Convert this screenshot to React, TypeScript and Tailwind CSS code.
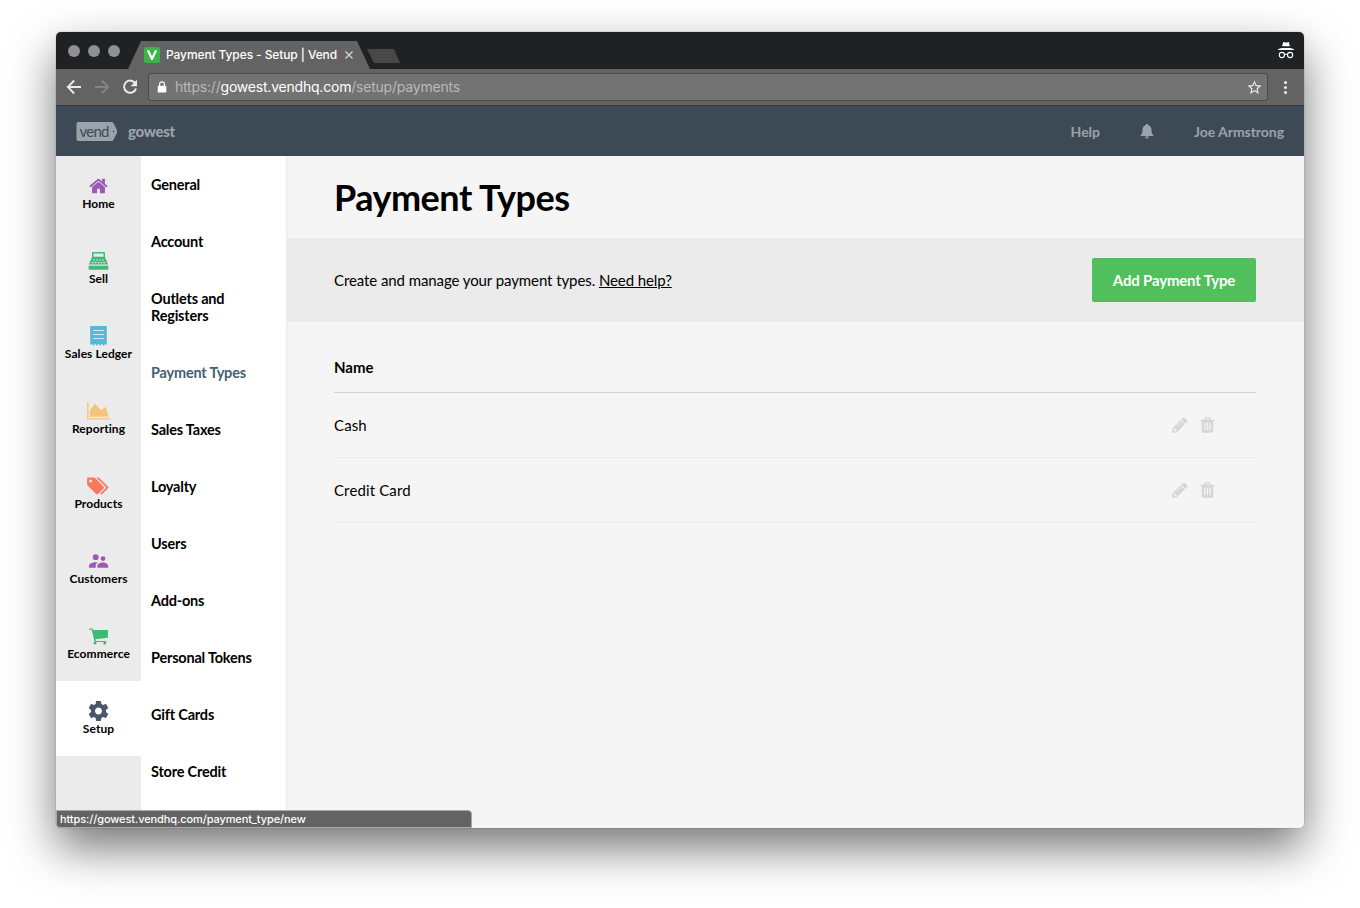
import React from "react";

type IconProps = { className?: string };

const HomeIcon = () => (
  <svg viewBox="0 0 1792 1792" className="h-[20px] w-[21px]" fill="#9b59b6">
    <path d="M1472 992v480q0 26-19 45t-45 19h-384v-384h-256v384h-384q-26 0-45-19t-19-45v-480q0-1 .5-3t.5-3l575-474 575 474q1 2 1 6zm223-69l-62 74q-8 9-21 11h-3q-13 0-21-7l-692-577-692 577q-12 8-24 7-13-2-21-11l-62-74q-8-10-7-23.5t11-21.5l719-599q32-26 76-26t76 26l244 204v-195q0-14 9-23t23-9h192q14 0 23 9t9 23v408l219 182q10 8 11 21.5t-7 23.5z" />
  </svg>
);

const SellIcon = () => (
  <svg viewBox="0 0 20 18" className="h-[18px] w-[21px]" fill="#3fb977">
    <path fillRule="evenodd" d="M4.6 0h10.8q1.1 0 1.1 1.1V6h-13V1.100q0-1.100 1.100-1.100zM5 1.500v3.300h10v-3.300z" />
    <path d="M3.300 5.700h13.400l2.900 6.800H.4z" />
    <path d="M.1 13.700h19.800v2.800q0 1.200-1.200 1.200H1.300Q.1 17.700.1 16.500z" />
    <g fill="#ebebeb">
      <path d="M4.700 7.500h1.600v1.100H4.700zM7.600 7.500h1.600v1.100H7.600zM10.700 7.500h1.600v1.100h-1.600zM13.700 7.500h1.600v1.100h-1.600zM3.300 10h1.700v1.200H3.300zM6.200 10h1.700v1.200H6.200zM9.200 10h1.700v1.200H9.200zM12.100 10h1.700v1.200h-1.700zM15 10h1.700v1.200H15z" />
    </g>
  </svg>
);

const LedgerIcon = () => (
  <svg viewBox="0 0 18 20" className="h-[20px] w-[19px]" fill="#56b8d8">
    <path d="M.7 0h16.600v19.300l-1.400-1.600-1.700 2-1.700-2-1.700 2-1.800-2-1.700 2-1.700-2-1.700 2-1.700-2L.7 19.300z" />
    <path d="M3.500 4.500h11M3.500 8.500h11M3.500 12.500h11" stroke="#d5edf5" strokeWidth="1" />
  </svg>
);

const ReportingIcon = () => (
  <svg viewBox="0 0 2048 1792" className="h-[20px] w-[23px]" fill="#f5c47a">
    <path d="M2048 1536v128h-2048v-1536h128v1408h1920zm-384-1024l256 896h-1664v-576l448-576 576 576z" />
  </svg>
);

const ProductsIcon = () => (
  <svg viewBox="0 0 1920 1792" className="h-[20px] w-[23px]" fill="#f7775f">
    <path d="M384 448q0-53-37.500-90.500t-90.500-37.500-90.500 37.500-37.500 90.500 37.500 90.500 90.500 37.500 90.500-37.500 37.500-90.500zm1067 576q0 53-37 90l-491 492q-39 37-91 37-53 0-90-37l-715-716q-38-37-64.500-101t-26.500-117v-416q0-52 38-90t90-38h416q53 0 117 26.500t102 64.500l715 714q37 39 37 91zm384 0q0 53-37 90l-491 492q-39 37-91 37-36 0-59-14t-53-45l470-470q37-37 37-90 0-52-37-91l-715-714q-38-38-102-64.500t-117-26.500h224q53 0 117 26.500t102 64.500l715 714q37 39 37 91z" />
  </svg>
);

const CustomersIcon = () => (
  <svg viewBox="0 0 20 20" className="h-[20px] w-[21px]" fill="#9b59b6">
    <circle cx="7.200" cy="6.200" r="2.900" />
    <circle cx="14.500" cy="7.600" r="2.400" />
    <path d="M.5 16.800v-1.900c0-2.300 3.900-3.600 6.700-3.600.7 0 1.500.1 2.200.3-1.600.9-2.200 2.200-2.200 3.400v1.800zM8.800 16.800v-1.700c0-2.200 3.100-3.600 5.600-3.600s5.300 1.400 5.300 3.600v1.700z" />
  </svg>
);

const CartIcon = () => (
  <svg viewBox="0 0 20 17" className="h-[17px] w-[21px]" fill="#3fb977">
    <path d="M.6.500h3.500l.6 1.500h14.700v7.700L6.900 11.200l.4 1.700h10.600v1.200H6.100L3.200 1.800H.6z" />
    <circle cx="6.500" cy="15.200" r="1.400" />
    <circle cx="16.300" cy="15.200" r="1.400" />
  </svg>
);

const GearIcon = () => (
  <svg viewBox="2 2 20 20" className="h-[20px] w-[21px]" fill="#48566e">
    <path d="M19.430 12.980c.040-.320.070-.640.070-.980s-.030-.660-.070-.980l2.110-1.650c.190-.150.240-.420.120-.640l-2-3.460c-.120-.220-.390-.300-.610-.220l-2.490 1c-.520-.400-1.080-.730-1.690-.980l-.380-2.650C14.460 2.180 14.250 2 14 2h-4c-.250 0-.460.180-.490.420l-.380 2.650c-.610.250-1.170.590-1.690.980l-2.490-1c-.230-.090-.490 0-.610.220l-2 3.460c-.130.220-.070.490.120.640l2.110 1.650c-.040.320-.070.650-.070.980s.030.660.070.980l-2.110 1.650c-.190.150-.240.420-.120.640l2 3.460c.120.220.390.300.610.220l2.490-1c.520.400 1.080.730 1.690.980l.380 2.650c.030.240.240.420.490.420h4c.250 0 .460-.180.490-.420l.380-2.650c.610-.250 1.170-.590 1.690-.980l2.490 1c.230.090.490 0 .610-.220l2-3.460c.120-.220.070-.490-.120-.640l-2.110-1.650zM12 15.500c-1.930 0-3.500-1.570-3.500-3.500s1.570-3.500 3.500-3.500 3.500 1.570 3.500 3.500-1.570 3.500-3.500 3.500z" />
  </svg>
);

const PencilIcon = () => (
  <svg viewBox="0 0 1792 1792" className="h-[18px] w-[18px]">
    <path d="M491 1536l91-91-235-235-91 91v107h128v128h107zm523-928q0-22-22-22-10 0-17 7l-542 542q-7 7-7 17 0 22 22 22 10 0 17-7l542-542q7-7 7-17zm-54-192l416 416-832 832h-416v-416zm683 96q0 53-37 90l-166 166-416-416 166-165q36-38 90-38 53 0 91 38l235 234q37 39 37 91z" fill="#d6d6d6" />
  </svg>
);

const TrashIcon = () => (
  <svg viewBox="0 0 1792 1792" className="h-[18px] w-[19px]">
    <path d="M704 1376v-704q0-14-9-23t-23-9h-64q-14 0-23 9t-9 23v704q0 14 9 23t23 9h64q14 0 23-9t9-23zm256 0v-704q0-14-9-23t-23-9h-64q-14 0-23 9t-9 23v704q0 14 9 23t23 9h64q14 0 23-9t9-23zm256 0v-704q0-14-9-23t-23-9h-64q-14 0-23 9t-9 23v704q0 14 9 23t23 9h64q14 0 23-9t9-23zm-544-992h448l-48-117q-7-9-17-11h-317q-10 2-17 11zm928 32v64q0 14-9 23t-23 9h-96v948q0 83-47 143.500t-113 60.500h-832q-66 0-113-58.500t-47-141.500v-952h-96q-14 0-23-9t-9-23v-64q0-14 9-23t23-9h309l70-167q15-37 54-63t79-26h320q40 0 79 26t54 63l70 167h309q14 0 23 9t9 23z" fill="#d6d6d6" />
  </svg>
);

const BellIcon = () => (
  <svg viewBox="0 0 14 15" className="h-[15px] w-[14px]" fill="#9aa3a9">
    <path d="M7 0c.7 0 1.200.5 1.200 1.100 2.100.6 3.300 2.500 3.300 4.900 0 3 .7 4.300 1.900 5.300v.7H.6v-.7C1.800 10.300 2.500 9 2.500 6c0-2.400 1.200-4.300 3.300-4.900C5.800.5 6.300 0 7 0zM5 12.600h4c0 1-.9 1.800-2 1.800s-2-.8-2-1.800z" />
  </svg>
);

const IncognitoIcon = () => (
  <svg viewBox="0 0 18 17" className="h-[17px] w-[18px]">
    <path d="M6.200 0l2 .5h1.600l2-.5 1.100 4.300H5.100z M.3 8C1.800 6.700 3.800 6 5 5.900h8c1.200.1 3.200.8 4.700 2.100z" fill="#fff" />
    <g fill="none" stroke="#fff" strokeWidth="1.100">
      <circle cx="4.900" cy="13" r="2.600" />
      <circle cx="13.100" cy="13" r="2.600" />
      <path d="M7.500 12.600q1.500-.8 3 0" />
    </g>
  </svg>
);

const BackIcon = ({ className }: IconProps) => (
  <svg viewBox="0 0 16 16" className={className} fill="none" stroke="currentColor" strokeWidth="1.800">
    <path d="M15 8H2.200M8.200 1.500L1.800 8l6.400 6.500" />
  </svg>
);

const ReloadIcon = () => (
  <svg viewBox="0 0 16 16" className="h-4 w-4" fill="none" stroke="#ebebeb" strokeWidth="2">
    <path d="M13.400 4.600A6.100 6.100 0 1 0 14 9.500" />
    <path d="M15 .8v6.400H8.600z" fill="#ebebeb" stroke="none" />
  </svg>
);

const LockIcon = () => (
  <svg viewBox="0 0 10 12" className="h-[12px] w-[10px]">
    <rect x=".7" y="4.700" width="8.600" height="6.900" rx=".9" fill="#fff" />
    <path d="M2.600 5V3.200a2.400 2.400 0 0 1 4.800 0V5" fill="none" stroke="#fff" strokeWidth="1.200" />
  </svg>
);

const StarIcon = () => (
  <svg viewBox="0 0 24 24" className="h-[17px] w-[17px]" fill="#ebebeb">
    <path d="M22 9.240l-7.190-.620L12 2 9.190 8.630 2 9.240l5.460 4.730L5.820 21 12 17.270 18.180 21l-1.630-7.030L22 9.240zM12 15.400l-3.760 2.270 1-4.280-3.320-2.880 4.380-.380L12 6.100l1.710 4.040 4.380.380-3.320 2.880 1 4.280L12 15.400z" />
  </svg>
);

const mainNav = [
  { label: "Home", icon: HomeIcon },
  { label: "Sell", icon: SellIcon },
  { label: "Sales Ledger", icon: LedgerIcon },
  { label: "Reporting", icon: ReportingIcon },
  { label: "Products", icon: ProductsIcon },
  { label: "Customers", icon: CustomersIcon },
  { label: "Ecommerce", icon: CartIcon },
  { label: "Setup", icon: GearIcon },
];

const setupNav = [
  "General",
  "Account",
  "Outlets and Registers",
  "Payment Types",
  "Sales Taxes",
  "Loyalty",
  "Users",
  "Add-ons",
  "Personal Tokens",
  "Gift Cards",
  "Store Credit",
];

function TabStrip() {
  return (
    <div className="flex h-[37px] shrink-0 items-end bg-[#1e2224] font-[Inter,sans-serif]">
      <div className="flex h-[37px] w-[72px] items-center gap-2 pl-3">
        <span className="h-3 w-3 rounded-full bg-[#918f95]" />
        <span className="h-3 w-3 rounded-full bg-[#918f95]" />
        <span className="h-3 w-3 rounded-full bg-[#918f95]" />
      </div>
      <div className="flex h-[28px] w-[242px] items-center bg-[#636363] pl-4 [clip-path:polygon(0_100%,13px_0,229px_0,100%_100%)]">
        <span className="flex h-4 w-4 items-center justify-center rounded-[2px] bg-[#3bb44a]">
          <svg viewBox="0 0 10 10" className="h-[10px] w-[10px]" fill="none" stroke="#fff" strokeWidth="2.200">
            <path d="M.9.300L5 9 9.100.300" />
          </svg>
        </span>
        <span className="ml-[6px] w-[172px] text-[12px] font-medium tracking-[-0.1px] whitespace-nowrap text-white">Payment Types - Setup | Vend</span>
        <svg viewBox="0 0 8 8" className="ml-[7px] h-2 w-2" stroke="#d0d0d0" strokeWidth="1.400">
          <path d="M.5.500l7 7M7.500.500l-7 7" />
        </svg>
      </div>
      <div className="mb-[6px] -ml-[3px] h-[14px] w-[33px] bg-[#484848] [clip-path:polygon(0_0,27px_0,100%_100%,7px_100%)]" />
      <div className="mr-[9px] mb-[10px] ml-auto">
        <IncognitoIcon />
      </div>
    </div>
  );
}

function Toolbar() {
  return (
    <div className="flex h-[37px] shrink-0 items-center border-b border-[#3c3c3c] bg-[#636363] pl-[10px] font-[Inter,sans-serif]">
      <BackIcon className="h-4 w-4 text-[#ebebeb]" />
      <BackIcon className="ml-3 h-4 w-4 rotate-180 text-[#858585]" />
      <span className="ml-3">
        <ReloadIcon />
      </span>
      <div className="ml-[10px] flex h-[28px] w-[1120px] items-center rounded-[3px] border border-[#4b4b4b] bg-[#737373] pr-1 pl-2">
        <LockIcon />
        <span className="ml-2 pb-[2px] text-[14px] tracking-[-0.21px] text-[#b9b9b9]">
          https://<span className="text-white">gowest.vendhq.com</span>/setup/payments
        </span>
        <span className="ml-auto">
          <StarIcon />
        </span>
      </div>
      <div className="ml-4 flex flex-col gap-[2px]">
        <span className="h-[3px] w-[3px] rounded-full bg-[#ebebeb]" />
        <span className="h-[3px] w-[3px] rounded-full bg-[#ebebeb]" />
        <span className="h-[3px] w-[3px] rounded-full bg-[#ebebeb]" />
      </div>
    </div>
  );
}

function AppHeader() {
  return (
    <header className="flex h-[50px] shrink-0 items-center bg-[#3d4a55] pr-5 pl-5 text-[14px] font-bold text-[#9aa3a9]">
      <svg viewBox="0 0 42 19" className="h-[19px] w-[42px]">
        <path d="M2.500 0h33q1.200 0 1.900 1l3.500 7q.6 1.500 0 3l-3.500 7q-.7 1-1.900 1h-33q-2 0-2-2V2q0-2 2-2z" fill="#9aa3a9" />
        <text x="3.500" y="14.500" fontSize="15" fontWeight="400" fontFamily="Lato, sans-serif" fill="#3d4a55" textLength="30">vend</text>
        <circle cx="37.500" cy="9.500" r=".8" fill="#3d4a55" />
      </svg>
      <span className="ml-[10px] text-[15px] font-black tracking-[-0.3px]">gowest</span>
      <span className="ml-auto">Help</span>
      <span className="ml-10">
        <BellIcon />
      </span>
      <span className="ml-10 tracking-[-0.05px]">Joe Armstrong</span>
    </header>
  );
}

function MainNav() {
  return (
    <nav className="w-[85px] shrink-0 bg-[#ebebeb]">
      {mainNav.map(({ label, icon: Icon }) => (
        <a key={label} className={`flex h-[75px] flex-col items-center pt-5 ${label === "Setup" ? "bg-white" : ""}`}>
          <span className="flex h-5 items-center justify-center">
            <Icon />
          </span>
          <span className="text-[12px] leading-[15px] font-bold tracking-[0.07px] whitespace-nowrap text-black">{label}</span>
        </a>
      ))}
    </nav>
  );
}

function SetupNav() {
  return (
    <nav className="w-[146px] shrink-0 overflow-hidden border-r border-[#ebebeb] bg-white">
      {setupNav.map((label) => (
        <a
          key={label}
          className={`block py-5 pr-8 pl-[10px] text-[14.5px] leading-[17px] font-bold tracking-[-0.2px] ${label === "Payment Types" ? "text-[#45606f]" : "text-black"}`}
        >
          {label}
        </a>
      ))}
    </nav>
  );
}

function Content() {
  return (
    <main className="flex grow flex-col bg-[#f5f5f5] text-black">
      <h1 className="flex h-[82px] items-center pb-[1px] pl-[47px] text-[36px] font-bold tracking-[-0.5px]">Payment Types</h1>
      <section className="flex h-[84px] items-center justify-between bg-[#ebebeb] pr-12 pl-[47px]">
        <p className="text-[15px] tracking-[-0.085px]">
          Create and manage your payment types. <a className="underline">Need help?</a>
        </p>
        <button className="h-11 w-[164px] rounded-[2px] bg-[#50bf5c] text-[15px] font-bold tracking-[-0.18px] text-white">Add Payment Type</button>
      </section>
      <section className="mr-12 ml-[47px] pt-5">
        <div className="flex h-[51px] items-center border-b border-[#d4d4d4] text-[15px] font-bold">Name</div>
        {["Cash", "Credit Card"].map((name) => (
          <div key={name} className="flex h-[65px] items-center border-b border-[#e9e9e9] text-[15px] tracking-[0.13px]">
            <span className="grow">{name}</span>
            <span className="mr-[39px] flex gap-[9px]">
              <PencilIcon />
              <TrashIcon />
            </span>
          </div>
        ))}
      </section>
    </main>
  );
}

export default function App() {
  return (
    <div className="h-[908px] w-[1360px] overflow-hidden bg-white px-14 pt-8 font-[Lato,sans-serif]">
      <div className="relative flex h-[796px] w-[1248px] flex-col rounded-[5px] shadow-[0_0_1px_rgba(0,0,0,0.6),0_20px_46px_rgba(0,0,0,0.54)]">
        <div className="flex min-h-0 grow flex-col overflow-hidden rounded-[5px]">
          <TabStrip />
          <Toolbar />
          <AppHeader />
          <div className="flex min-h-0 grow">
            <MainNav />
            <SetupNav />
            <Content />
          </div>
        </div>
        <div className="absolute bottom-0 left-0 flex h-[18px] w-[416px] items-center rounded-tr-[4px] rounded-bl-[4px] border border-[#a9a9a9] bg-[#636363] pl-[3px] font-[Inter,sans-serif] text-[11px] font-medium tracking-[-0.1px] text-white">
          https://gowest.vendhq.com/payment_type/new
        </div>
      </div>
    </div>
  );
}
